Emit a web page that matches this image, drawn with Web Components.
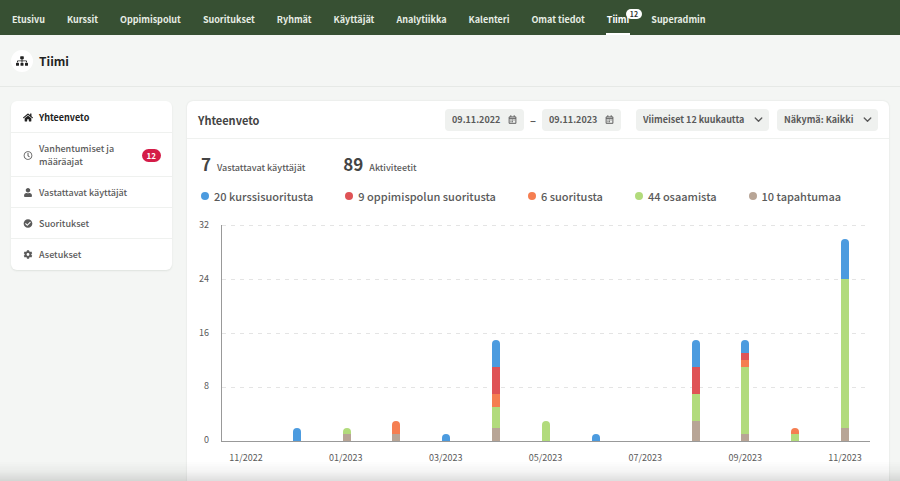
<!DOCTYPE html>
<html lang="fi">
<head>
<meta charset="utf-8">
<meta name="viewport" content="width=device-width, initial-scale=1">
<title>Tiimi</title>
<style>
  body {
    margin: 0;
    font-family: "Noto Sans CJK SC", "Noto Sans", sans-serif;
    font-size: 11px;
    line-height: 14px;
    color: #5a5a5a;
    background: #f4f6f4;
  }
</style>
</head>
<body>
<team-app></team-app>

<script>
const ICONS = {
  sitemap: ['0 0 640 512', '<path d="M128 352H32c-17.67 0-32 14.33-32 32v96c0 17.67 14.33 32 32 32h96c17.67 0 32-14.33 32-32v-96c0-17.67-14.33-32-32-32zm-24-80h192v48h48v-48h192v48h48v-57.59c0-21.17-17.23-38.41-38.41-38.41H344v-64h40c17.67 0 32-14.33 32-32V32c0-17.67-14.33-32-32-32H256c-17.67 0-32 14.33-32 32v96c0 17.67 14.33 32 32 32h40v64H94.41C73.23 224 56 241.23 56 262.41V320h48v-48zm264 80h-96c-17.67 0-32 14.33-32 32v96c0 17.67 14.33 32 32 32h96c17.67 0 32-14.33 32-32v-96c0-17.67-14.33-32-32-32zm240 0h-96c-17.67 0-32 14.33-32 32v96c0 17.67 14.33 32 32 32h96c17.67 0 32-14.33 32-32v-96c0-17.67-14.33-32-32-32z"/>'],
  home: ['0 0 576 512', '<path d="M280.37 148.26L96 300.11V464a16 16 0 0 0 16 16l112.06-.29a16 16 0 0 0 15.92-16V368a16 16 0 0 1 16-16h64a16 16 0 0 1 16 16v95.64a16 16 0 0 0 16 16.05L464 480a16 16 0 0 0 16-16V300L295.67 148.26a12.19 12.19 0 0 0-15.3 0zM571.6 251.47L488 182.56V44.05a12 12 0 0 0-12-12h-56a12 12 0 0 0-12 12v72.61L318.47 43a48 48 0 0 0-61 0L4.34 251.47a12 12 0 0 0-1.6 16.9l25.5 31A12 12 0 0 0 45.15 301l235.22-193.74a12.19 12.19 0 0 1 15.3 0L530.9 301a12 12 0 0 0 16.9-1.6l25.5-31a12 12 0 0 0-1.7-16.93z"/>'],
  clock: ['0 0 512 512', '<path d="M256 8C119 8 8 119 8 256s111 248 248 248 248-111 248-248S393 8 256 8zm0 448c-110.5 0-200-89.5-200-200S145.5 56 256 56s200 89.5 200 200-89.5 200-200 200zm61.8-104.4l-84.9-61.7c-3.1-2.3-4.9-5.9-4.9-9.7V116c0-6.6 5.4-12 12-12h32c6.6 0 12 5.4 12 12v141.7l66.8 48.6c5.4 3.9 6.5 11.4 2.6 16.8L334.6 349c-3.9 5.3-11.4 6.5-16.8 2.6z"/>'],
  user: ['0 0 448 512', '<path d="M224 256c70.7 0 128-57.3 128-128S294.7 0 224 0 96 57.3 96 128s57.3 128 128 128zm89.6 32h-16.7c-22.2 10.2-46.9 16-72.9 16s-50.6-5.8-72.9-16h-16.7C60.2 288 0 348.2 0 422.4V464c0 26.5 21.5 48 48 48h352c26.5 0 48-21.5 48-48v-41.6c0-74.2-60.2-134.4-134.4-134.4z"/>'],
  check: ['0 0 512 512', '<path d="M504 256c0 136.967-111.033 248-248 248S8 392.967 8 256 119.033 8 256 8s248 111.033 248 248zM227.314 387.314l184-184c6.248-6.248 6.248-16.379 0-22.627l-22.627-22.627c-6.248-6.249-16.379-6.249-22.628 0L216 308.118l-70.059-70.059c-6.248-6.248-16.379-6.248-22.628 0l-22.627 22.627c-6.248 6.248-6.248 16.379 0 22.627l104 104c6.249 6.249 16.379 6.249 22.628.001z"/>'],
  cog: ['0 0 512 512', '<path d="M487.4 315.7l-42.6-24.6c4.3-23.2 4.3-47 0-70.2l42.6-24.6c4.9-2.8 7.1-8.6 5.5-14-11.1-35.6-30-67.8-54.7-94.6-3.8-4.1-10-5.1-14.8-2.3L380.8 110c-17.9-15.4-38.5-27.3-60.8-35.1V25.8c0-5.6-3.9-10.5-9.4-11.7-36.7-8.2-74.3-7.8-109.2 0-5.5 1.2-9.4 6.1-9.4 11.7V75c-22.2 7.9-42.8 19.8-60.8 35.1L88.7 85.5c-4.9-2.8-11-1.9-14.8 2.3-24.7 26.7-43.6 58.9-54.7 94.6-1.7 5.4.6 11.2 5.5 14L67.3 221c-4.3 23.2-4.3 47 0 70.2l-42.6 24.6c-4.9 2.8-7.1 8.6-5.5 14 11.1 35.6 30 67.8 54.7 94.6 3.8 4.1 10 5.1 14.8 2.3l42.6-24.6c17.9 15.4 38.5 27.3 60.8 35.1v49.2c0 5.6 3.9 10.5 9.4 11.7 36.7 8.2 74.3 7.8 109.2 0 5.5-1.2 9.4-6.1 9.4-11.7v-49.2c22.2-7.9 42.8-19.8 60.8-35.1l42.6 24.6c4.9 2.8 11 1.9 14.8-2.3 24.7-26.7 43.6-58.9 54.7-94.6 1.5-5.5-.7-11.3-5.6-14.1zM256 336c-44.1 0-80-35.9-80-80s35.9-80 80-80 80 35.9 80 80-35.9 80-80 80z"/>'],
  calendar: ['0 0 16 16', '<path fill="none" stroke="currentColor" stroke-width="1.7" d="M2 3.4h12v11.4H2zM2 6h12M5 .4v3M11 .4v3"/><path d="M4.3 8h1.9v1.7H4.3zM7 8h1.9v1.7H7zM9.8 8h1.9v1.7H9.8zM4.3 11h1.9v1.7H4.3zM7 11h1.9v1.7H7z"/>'],
  chevron: ['0 0 16 16', '<path fill="none" stroke="currentColor" stroke-width="2.4" stroke-linecap="round" stroke-linejoin="round" d="M2.2 5.2L8 11l5.8-5.8"/>'],
}

function define(name, html, setup) {
  const template = document.createElement('template')
  template.innerHTML = html
  customElements.define(name, class extends HTMLElement {
    constructor() {
      super()
      this.attachShadow({ mode: 'open' }).append(template.content.cloneNode(true))
    }

    connectedCallback() {
      if (this._ready) return
      this._ready = true
      if (setup) setup(this, this.shadowRoot)
    }
  })
}

function make_badge(text) {
  const badge = document.createElement('span')
  badge.className = 'badge'
  badge.textContent = text
  return badge
}

define('team-icon', `
  <style>
    :host { display: block; flex: none; width: 10px; height: 10px; }
    svg { display: block; width: 100%; height: 100%; fill: currentColor; }
  </style>
  <svg aria-hidden="true"></svg>
`, (host, root) => {
  const [viewBox, shapes] = ICONS[host.getAttribute('name')]
  const svg = root.querySelector('svg')
  svg.setAttribute('viewBox', viewBox)
  svg.innerHTML = shapes
})

define('team-nav-item', `
  <style>
    :host { display: flex; }
    a {
      position: relative; display: flex; align-items: center;
      padding: 6px 1px 0; border-bottom: 2px solid transparent;
      font-weight: 700; font-size: 9px; color: #e6ede4;
      text-decoration: none; white-space: nowrap;
    }
    :host([active]) a { color: #fff; border-color: #fff; }
    .badge {
      position: absolute; left: 20px; top: 9px;
      padding: 0 4px; border-radius: 5px;
      font-size: 7px; line-height: 10px; color: #333; background: #fff;
    }
  </style>
  <a href="#"><slot></slot></a>
`, (host, root) => {
  if (host.hasAttribute('badge')) root.querySelector('a').append(make_badge(host.getAttribute('badge')))
})

define('team-nav', `
  <style>
    :host { display: block; background: #375033; }
    nav { display: flex; gap: 20px; height: 35px; padding: 0 11px; }
  </style>
  <nav><slot></slot></nav>
`)

define('team-title', `
  <style>
    :host {
      display: flex; align-items: center; gap: 6px;
      height: 51px; padding: 0 11px; border-bottom: 1px solid #e6e9e6;
    }
    .disc {
      display: flex; align-items: center; justify-content: center;
      width: 22px; height: 22px; border-radius: 50%;
      color: #222; background: #fff;
    }
    team-icon { width: 12px; }
    h1 { margin: 0; font-size: 12px; line-height: 20px; font-weight: 700; color: #222; }
  </style>
  <span class="disc"><team-icon name="sitemap"></team-icon></span>
  <h1><slot></slot></h1>
`)

define('team-menu-item', `
  <style>
    :host { display: block; border-top: 1px solid #eff1ef; }
    :host(:first-child) { border-top: 0; }
    a {
      display: flex; align-items: center; gap: 6px;
      padding: 9px 11px 8px 12px; font-size: 9px; line-height: 13px; font-weight: 500;
      color: #5a5a5a; text-decoration: none;
    }
    :host([active]) a { color: #222; font-weight: 700; }
    team-icon { width: 10px; height: 9px; }
    .text { flex: 1; }
    .badge {
      padding: 0 5px; border-radius: 7px;
      font-size: 8px; line-height: 13px; font-weight: 700;
      color: #fff; background: #d41c48;
    }
  </style>
  <a href="#"><span class="text"><slot></slot></span></a>
`, (host, root) => {
  const a = root.querySelector('a')
  const icon = document.createElement('team-icon')
  icon.setAttribute('name', host.getAttribute('icon'))
  a.prepend(icon)
  if (host.hasAttribute('badge')) a.append(make_badge(host.getAttribute('badge')))
})

define('team-menu', `
  <style>
    :host {
      display: block; padding: 1px 0; border-radius: 6px; background: #fff;
      box-shadow: 0 1px 2px rgba(40, 60, 40, .1);
    }
  </style>
  <nav><slot></slot></nav>
`)

define('team-date', `
  <style>
    :host { display: block; }
    label {
      display: flex; align-items: center; gap: 6px;
      padding: 0 7px; border-radius: 4px; background: #eff1ef;
    }
    input {
      width: 50px; height: 22px; padding: 0; border: 0; outline: 0;
      font: 700 9px/22px "Noto Sans CJK SC", sans-serif; color: #5a5a5a; background: none;
    }
    team-icon { width: 9px; height: 9px; }
  </style>
  <label><input type="text"><team-icon name="calendar"></team-icon></label>
`, (host, root) => {
  const input = root.querySelector('input')
  input.value = host.getAttribute('value')
  input.setAttribute('aria-label', host.getAttribute('label'))
})

define('team-select', `
  <style>
    :host { display: grid; align-items: center; border-radius: 4px; background: #eff1ef; }
    select, team-icon { grid-area: 1 / 1; }
    select {
      appearance: none; height: 22px; padding: 0 24px 0 7px; border: 0; outline: 0;
      font: 700 9px/22px "Noto Sans CJK SC", sans-serif; color: #5a5a5a; background: none;
    }
    team-icon { width: 9px; height: 9px; justify-self: end; margin-right: 6px; pointer-events: none; }
  </style>
  <select><option></option></select>
  <team-icon name="chevron"></team-icon>
`, (host, root) => {
  root.querySelector('option').textContent = host.getAttribute('value')
  root.querySelector('select').setAttribute('aria-label', host.getAttribute('label'))
})

define('team-stat', `
  <style>
    :host { display: flex; align-items: baseline; gap: 6px; font-size: 9px; font-weight: 500; }
    strong { font-size: 17px; line-height: 24px; font-weight: 700; color: #444; }
  </style>
  <strong></strong><span><slot></slot></span>
`, (host, root) => {
  root.querySelector('strong').textContent = host.getAttribute('value')
})

define('team-legend', `
  <style>
    :host { display: flex; align-items: center; gap: 5px; line-height: 16px; font-weight: 500; white-space: nowrap; }
    i { width: 8px; height: 8px; border-radius: 50%; background: var(--dot); }
  </style>
  <i></i><span><slot></slot></span>
`)

// Series order is bottom to top of each stack
const SERIES = ['#b8a596', '#b2db7c', '#f57e51', '#df5356', '#4c9bdf']
const MAX = 32
const MONTHS = [
  ['11/2022', [0, 0, 0, 0, 0]],
  ['12/2022', [0, 0, 0, 0, 2]],
  ['01/2023', [1, 1, 0, 0, 0]],
  ['02/2023', [1, 0, 2, 0, 0]],
  ['03/2023', [0, 0, 0, 0, 1]],
  ['04/2023', [2, 3, 2, 4, 4]],
  ['05/2023', [0, 3, 0, 0, 0]],
  ['06/2023', [0, 0, 0, 0, 1]],
  ['07/2023', [0, 0, 0, 0, 0]],
  ['08/2023', [3, 4, 0, 4, 4]],
  ['09/2023', [1, 10, 1, 1, 2]],
  ['10/2023', [0, 1, 1, 0, 0]],
  ['11/2023', [2, 22, 0, 0, 6]],
]

define('team-chart', `
  <style>
    :host {
      display: grid; grid-template-columns: 12px 1fr; column-gap: 12px;
      font-size: 9px; line-height: 18px;
    }
    .scale { display: flex; flex-direction: column; justify-content: space-between; text-align: right; }
    .plot {
      display: grid; height: 216px; margin: 9px 0 7px;
      border-left: 1px solid #999; border-bottom: 1px solid #999;
    }
    .lines, .bars { grid-area: 1 / 1; display: grid; }
    .lines { grid-template-rows: repeat(4, 1fr); margin-right: 3px; }
    .lines i { background: repeating-linear-gradient(90deg, #e4e4e4 0 4px, transparent 4px 9px) top / 100% 1px no-repeat; }
    .bars, .months { display: grid; grid-template-columns: repeat(13, 1fr); }
    .bar {
      align-self: end; justify-self: center;
      display: flex; flex-direction: column-reverse;
      width: 8px; border-radius: 4px 4px 0 0; overflow: hidden;
    }
    .months { grid-column: 2; text-align: center; }
  </style>
  <div class="scale"></div>
  <div class="plot"><div class="lines"><i></i><i></i><i></i><i></i></div><div class="bars"></div></div>
  <div class="months"></div>
`, (host, root) => {
  const scale = root.querySelector('.scale')
  for (let n = MAX; n >= 0; n -= 8) {
    const tick = document.createElement('span')
    tick.textContent = n
    scale.append(tick)
  }
  MONTHS.forEach(([name, values], i) => {
    const total = values.reduce((a, b) => a + b, 0)
    const bar = document.createElement('div')
    bar.className = 'bar'
    bar.style.height = total / MAX * 100 + '%'
    values.forEach((v, s) => {
      if (!v) return
      const part = document.createElement('div')
      part.style.flex = v
      part.style.background = SERIES[s]
      bar.append(part)
    })
    root.querySelector('.bars').append(bar)
    const month = document.createElement('span')
    if (i % 2 === 0) month.textContent = name
    root.querySelector('.months').append(month)
  })
})

define('team-summary', `
  <style>
    :host {
      display: block; border-radius: 6px 6px 0 0; background: #fff;
      box-shadow: 0 0 2px rgba(40, 60, 40, .12);
    }
    header {
      display: flex; align-items: center; height: 37px;
      padding: 0 11px; border-bottom: 1px solid #eff1ef;
    }
    h2 { flex: 1; margin: 0; font-size: 11px; font-weight: 700; color: #444; }
    .range { display: flex; align-items: center; gap: 6px; margin-right: 15px; font-weight: 700; }
    .selects { display: flex; gap: 8px; }
    .body { padding: 13px 19px 0 14px; }
    .row { display: flex; }
    .stats { gap: 38px; }
    .legend { gap: 32px; margin: 12px 0; }
    team-chart { margin-left: -4px; }
  </style>
  <header>
    <h2>Yhteenveto</h2>
    <div class="range">
      <team-date label="Alkaen" value="09.11.2022"></team-date>
      <span>–</span>
      <team-date label="Päättyen" value="09.11.2023"></team-date>
    </div>
    <div class="selects">
      <team-select label="Aikaväli" value="Viimeiset 12 kuukautta"></team-select>
      <team-select label="Näkymä" value="Näkymä: Kaikki"></team-select>
    </div>
  </header>
  <div class="body">
    <div class="row stats">
      <team-stat value="7">Vastattavat käyttäjät</team-stat>
      <team-stat value="89">Aktiviteetit</team-stat>
    </div>
    <div class="row legend">
      <team-legend style="--dot: #4c9bdf">20 kurssisuoritusta</team-legend>
      <team-legend style="--dot: #df5356">9 oppimispolun suoritusta</team-legend>
      <team-legend style="--dot: #f57e51">6 suoritusta</team-legend>
      <team-legend style="--dot: #b2db7c">44 osaamista</team-legend>
      <team-legend style="--dot: #b8a596">10 tapahtumaa</team-legend>
    </div>
    <team-chart></team-chart>
  </div>
`)

define('team-app', `
  <style>
    :host { display: flex; flex-direction: column; min-height: 100vh; }
    main {
      flex: 1; display: grid; grid-template-columns: 161px 1fr; gap: 15px;
      padding: 14px 11px 0;
    }
    team-menu { align-self: start; }
    .fade {
      position: fixed; left: 0; right: 0; bottom: 0; height: 20px; pointer-events: none;
      background: linear-gradient(rgba(0, 0, 0, 0), rgba(0, 0, 0, .04) 50%, rgba(0, 0, 0, .13));
    }
  </style>
  <team-nav>
    <team-nav-item>Etusivu</team-nav-item>
    <team-nav-item>Kurssit</team-nav-item>
    <team-nav-item>Oppimispolut</team-nav-item>
    <team-nav-item>Suoritukset</team-nav-item>
    <team-nav-item>Ryhmät</team-nav-item>
    <team-nav-item>Käyttäjät</team-nav-item>
    <team-nav-item>Analytiikka</team-nav-item>
    <team-nav-item>Kalenteri</team-nav-item>
    <team-nav-item>Omat tiedot</team-nav-item>
    <team-nav-item active badge="12">Tiimi</team-nav-item>
    <team-nav-item>Superadmin</team-nav-item>
  </team-nav>
  <team-title>Tiimi</team-title>
  <main>
    <team-menu>
      <team-menu-item icon="home" active>Yhteenveto</team-menu-item>
      <team-menu-item icon="clock" badge="12">Vanhentumiset ja määräajat</team-menu-item>
      <team-menu-item icon="user">Vastattavat käyttäjät</team-menu-item>
      <team-menu-item icon="check">Suoritukset</team-menu-item>
      <team-menu-item icon="cog">Asetukset</team-menu-item>
    </team-menu>
    <team-summary></team-summary>
  </main>
  <div class="fade"></div>
`)
</script>
</body>
</html>
